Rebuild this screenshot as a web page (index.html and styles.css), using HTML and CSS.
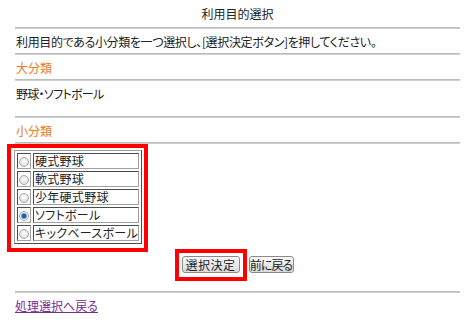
FILE: index.html
```html
<!DOCTYPE html>
<html lang="ja">
<head>
    <meta charset="UTF-8">
    <title>利用目的選択</title>
    <link rel="stylesheet" href="styles.css">
</head>
<body>
    <div class="page">
        <div class="title">利用目的選択</div>
        <div class="line"></div>
        <div class="row guide">利用目的である小分類を一つ選択し、[選択決定ボタン]を押してください。</div>
        <div class="line"></div>
        <div class="row heading">大分類</div>
        <div class="line"></div>
        <div class="row tall tight">野球・ソフトボール</div>
        <div class="line"></div>
        <div class="row heading">小分類</div>
        <div class="line"></div>
        <div class="table-wrap">
            <table class="choices">
                <tr><td class="radio"><input type="radio" name="sub"></td><td class="label">硬式野球</td></tr>
                <tr><td class="radio"><input type="radio" name="sub"></td><td class="label">軟式野球</td></tr>
                <tr><td class="radio"><input type="radio" name="sub"></td><td class="label">少年硬式野球</td></tr>
                <tr><td class="radio"><input type="radio" name="sub" checked></td><td class="label">ソフトボール</td></tr>
                <tr><td class="radio"><input type="radio" name="sub"></td><td class="label">キックベースボール</td></tr>
            </table>
        </div>
        <div class="buttons">
            <span class="marked"><button class="btn decide">選択決定</button></span>
            <button class="btn back">前に戻る</button>
        </div>
        <div class="line"></div>
        <div class="footer"><a href="#">処理選択へ戻る</a></div>
    </div>
</body>
</html>
```

FILE: styles.css
```css
body { margin: 0; font-family: "Noto Sans CJK JP", "DejaVu Sans", sans-serif; font-size: 12px; color: #222; background: #fff; font-feature-settings: "palt"; }
.page { padding: 0 10px 0 15px; }
.title { height: 27px; line-height: 28px; text-align: center; }
.line { height: 2px; background: #cfcfcf; border-top: 1px solid #bdbdbd; box-sizing: border-box; }
.row { height: 24px; line-height: 25px; padding-left: 1px; }
.row.tall { height: 35px; line-height: 26px; }
.guide { letter-spacing: -0.35px; }
.tight { letter-spacing: -0.7px; }
.heading { color: #e8792e; }

.table-wrap { position: relative; display: inline-block; margin: 6px 0 0 -1px; vertical-align: top; }
.table-wrap::after { content: ""; position: absolute; left: -7px; right: -6px; top: -6px; bottom: -8px; border: 4px solid #f00; }
.choices { display: block; border: 1px outset #a0a0a0; border-spacing: 2px; width: 128px; box-sizing: border-box; }
.choices td { border: 1px inset #a0a0a0; padding: 0; height: 14px; font-size: 12px; line-height: 14px; white-space: nowrap; }
.choices td.radio { width: 15px; text-align: center; }
.choices td.label { width: 100px; padding-left: 1px; letter-spacing: 0.3px; }
.choices input { appearance: none; display: block; margin: 1px auto 0; width: 10px; height: 10px; border: 1px solid #a8a8a8; border-radius: 50%; background: radial-gradient(circle at 50% 40%, #fdfdfd, #d6d6d6); box-sizing: border-box; }
.choices input:checked { background: radial-gradient(circle, #1d5fa8 0 2px, #6b9ccf 2.5px, #f2f2f2 3.5px, #d6d6d6); }

.buttons { display: flex; justify-content: center; align-items: flex-start; gap: 9px; margin: 12px 0 18px; }
.marked { position: relative; display: inline-block; }
.marked::after { content: ""; position: absolute; left: -7px; right: -7px; top: -7px; bottom: -8px; border: 4px solid #f00; }
.btn { display: block; font-family: inherit; font-feature-settings: "palt"; font-size: 12px; height: 17px; padding: 0; line-height: 14px; border: 1px solid #8a8a8a; border-radius: 3px; background: linear-gradient(#fafafa, #dadada); color: #222; text-align: center; white-space: nowrap; }
.decide { width: 58px; letter-spacing: 0.5px; }
.back { width: 45px; letter-spacing: -1px; }
.footer { padding-top: 4px; line-height: 18px; }
.footer a { color: #7b2c91; }
```
